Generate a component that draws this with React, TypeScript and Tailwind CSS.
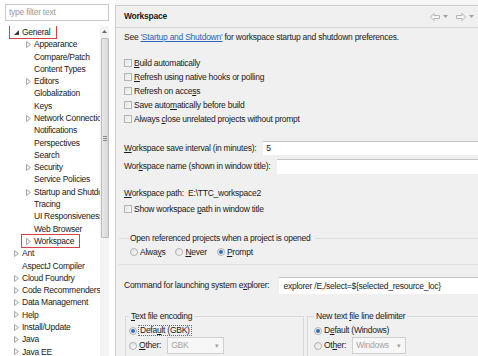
import React from 'react';

type TreeItem = { label: string; level: 0 | 1; arrow: 'open' | 'closed' | 'none'; marked?: boolean };

const TREE: TreeItem[] = [
  { label: 'General', level: 0, arrow: 'open', marked: true },
  { label: 'Appearance', level: 1, arrow: 'closed' },
  { label: 'Compare/Patch', level: 1, arrow: 'none' },
  { label: 'Content Types', level: 1, arrow: 'none' },
  { label: 'Editors', level: 1, arrow: 'closed' },
  { label: 'Globalization', level: 1, arrow: 'none' },
  { label: 'Keys', level: 1, arrow: 'none' },
  { label: 'Network Connections', level: 1, arrow: 'closed' },
  { label: 'Notifications', level: 1, arrow: 'none' },
  { label: 'Perspectives', level: 1, arrow: 'none' },
  { label: 'Search', level: 1, arrow: 'none' },
  { label: 'Security', level: 1, arrow: 'closed' },
  { label: 'Service Policies', level: 1, arrow: 'none' },
  { label: 'Startup and Shutdown', level: 1, arrow: 'closed' },
  { label: 'Tracing', level: 1, arrow: 'none' },
  { label: 'UI Responsiveness Monitoring', level: 1, arrow: 'none' },
  { label: 'Web Browser', level: 1, arrow: 'none' },
  { label: 'Workspace', level: 1, arrow: 'closed', marked: true },
  { label: 'Ant', level: 0, arrow: 'closed' },
  { label: 'AspectJ Compiler', level: 0, arrow: 'none' },
  { label: 'Cloud Foundry', level: 0, arrow: 'closed' },
  { label: 'Code Recommenders', level: 0, arrow: 'closed' },
  { label: 'Data Management', level: 0, arrow: 'closed' },
  { label: 'Help', level: 0, arrow: 'closed' },
  { label: 'Install/Update', level: 0, arrow: 'closed' },
  { label: 'Java', level: 0, arrow: 'closed' },
  { label: 'Java EE', level: 0, arrow: 'closed' },
];

const Arrow = ({ kind }: { kind: TreeItem['arrow'] }) => (
  <span className="w-[9px] h-[9px] shrink-0 flex items-center justify-center">
    {kind === 'closed' && (
      <svg width="5" height="7" viewBox="0 0 5 7">
        <path d="M0.5 0.5 L4.5 3.5 L0.5 6.5 Z" fill="#f4f4f4" stroke="#a8a8a8" strokeWidth="1" />
      </svg>
    )}
    {kind === 'open' && (
      <svg width="5" height="5" viewBox="0 0 5 5">
        <path d="M5 0 L5 5 L0 5 Z" fill="#3c3c3c" />
      </svg>
    )}
  </span>
);

const Check = () => (
  <span className="w-[8px] h-[8px] shrink-0 border border-[#b4b4b4] bg-linear-to-br from-[#e4e4e4] to-[#fafafa]" />
);

const Radio = ({ on }: { on?: boolean }) => (
  <span className="w-[8px] h-[8px] shrink-0 rounded-full border border-[#b2b2b2] bg-linear-to-br from-[#e2e2e2] to-[#fafafa] flex items-center justify-center">
    {on && <span className="w-[4px] h-[4px] rounded-full bg-[#2f6fbf]" />}
  </span>
);

const CheckRow = ({ children }: { children: React.ReactNode }) => (
  <div className="h-[14px] flex items-center gap-[2px]">
    <Check />
    <span>{children}</span>
  </div>
);

const Combo = ({ value, width }: { value: string; width: string }) => (
  <div className={`${width} h-[17px] ml-[4px] border border-[#cfcfcf] bg-[#f7f7f7] flex items-center justify-between pl-[3px] pr-[4px] text-[#a3a3a3]`}>
    <span>{value}</span>
    <span className="text-[7px]">▾</span>
  </div>
);

const Sidebar = () => (
  <div className="w-[115px] shrink-0 bg-white flex flex-col pt-[4px]">
    <div className="ml-[5px] w-[104px] h-[17px] border border-[#c9c9c9] flex items-center pl-[3px] text-[#9c9c9c]">
      type filter text
    </div>
    <div className="flex mt-[5px] flex-1 min-h-0">
      <div className="w-[100px] overflow-hidden whitespace-nowrap">
        {TREE.map((item) => (
          <div
            key={item.label}
            className={`h-[12.3px] flex items-center ${item.level === 0 ? 'pl-[9px]' : 'pl-[21px]'}`}
          >
            <span
              className={`h-[14px] flex items-center pl-[2px] border ${
                item.marked ? 'border-[#d8414a] pr-[5px]' : 'border-transparent'
              }`}
            >
              <Arrow kind={item.arrow} />
              <span className="ml-[1px]">{item.label}</span>
            </span>
          </div>
        ))}
      </div>
      <div className="w-[9px] bg-[#f3f3f3] flex flex-col items-center">
        <div className="h-[10px] flex items-center justify-center">
          <svg width="5" height="3" viewBox="0 0 5 3">
            <path d="M0 3 L2.5 0 L5 3 Z" fill="#6a6a6a" />
          </svg>
        </div>
        <div className="mt-[2px] w-[8px] h-[200px] rounded-[1px] border border-[#bcbcbc] bg-linear-to-r from-[#e9e9e9] to-[#d6d6d6] flex flex-col items-center justify-center gap-[1px]">
          <span className="w-[4px] h-px bg-[#8a8a8a]" />
          <span className="w-[4px] h-px bg-[#8a8a8a]" />
          <span className="w-[4px] h-px bg-[#8a8a8a]" />
        </div>
      </div>
    </div>
  </div>
);

const NavArrows = () => (
  <div className="flex items-center gap-[3px]">
    <svg width="10" height="8" viewBox="0 0 10 8">
      <path d="M0.5 4 L4 0.5 L4 2.5 L9.5 2.5 L9.5 5.5 L4 5.5 L4 7.5 Z" fill="#f6f6f6" stroke="#b5b5b5" strokeWidth="1" />
    </svg>
    <svg width="5" height="3" viewBox="0 0 5 3">
      <path d="M0 0 L5 0 L2.5 3 Z" fill="#a0a0a0" />
    </svg>
    <svg width="10" height="8" viewBox="0 0 10 8" className="ml-[5px]">
      <path d="M9.5 4 L6 0.5 L6 2.5 L0.5 2.5 L0.5 5.5 L6 5.5 L6 7.5 Z" fill="#f6f6f6" stroke="#b5b5b5" strokeWidth="1" />
    </svg>
    <svg width="5" height="3" viewBox="0 0 5 3">
      <path d="M0 0 L5 0 L2.5 3 Z" fill="#a0a0a0" />
    </svg>
  </div>
);

const Main = () => (
  <div className="flex-1 min-w-0 flex flex-col pt-[5px] bg-[#f7f7f7]">
    <div className="flex-1 flex flex-col border-t border-l border-[#cdcdcd] bg-[#f0f0f0]">
      <div className="h-[22px] shrink-0 border-b border-[#d6d6d6] flex items-center justify-between pl-[8px] pr-[4px]">
        <span className="font-bold text-[#1a1a1a]">Workspace</span>
        <NavArrows />
      </div>

      <div className="flex flex-col pl-[8px]">
        <div className="mt-[2px] h-[14px] flex items-center whitespace-nowrap">
          See&nbsp;<span className="text-[#2a66b8] underline">'Startup and Shutdown'</span>&nbsp;for workspace startup and shutdown preferences.
        </div>

        <div className="mt-[12px]">
          <CheckRow><u>B</u>uild automatically</CheckRow>
          <CheckRow><u>R</u>efresh using native hooks or polling</CheckRow>
          <CheckRow>Refresh on acce<u>s</u>s</CheckRow>
          <CheckRow>Save auto<u>m</u>atically before build</CheckRow>
          <CheckRow>Always <u>c</u>lose unrelated projects without prompt</CheckRow>
        </div>

        <div className="mt-[14px] h-[16px] flex items-center whitespace-nowrap">
          <span><u>W</u>orkspace save interval (in minutes):</span>
          <div className="ml-[7px] flex-1 h-[14px] bg-white border-t border-[#c4c4c4] flex items-center pl-[3px]">5</div>
        </div>
        <div className="mt-[2px] h-[16px] flex items-center whitespace-nowrap">
          <span>Wor<u>k</u>space name (shown in window title):</span>
          <div className="ml-[7px] flex-1 h-[15px] bg-white border-t border-[#c4c4c4]" />
        </div>

        <div className="mt-[12px] h-[14px] flex items-center whitespace-nowrap">
          <span><u>W</u>orkspace path:&nbsp;&nbsp;E:\TTC_workspace2</span>
        </div>
        <div className="mt-[2px]">
          <CheckRow>Show workspace <u>p</u>ath in window title</CheckRow>
        </div>

        <fieldset className="mt-[15px] -ml-[5px] border-t border-b border-[#dedede] pl-[11px] pb-[5px]">
          <legend className="h-[14px] flex items-center pr-[4px]">
            <span>Open referenced projects when a project is opened</span>
          </legend>
          <div className="h-[14px] flex items-center gap-[2px]">
            <Radio />
            <span className="mr-[8px]">Alwa<u>y</u>s</span>
            <Radio />
            <span className="mr-[8px]"><u>N</u>ever</span>
            <Radio on />
            <span><u>P</u>rompt</span>
          </div>
        </fieldset>

        <div className="mt-[12px] h-[17px] flex items-center whitespace-nowrap">
          <span>Command for launching system e<u>x</u>plorer:</span>
          <div className="ml-[10px] flex-1 h-[17px] bg-white border-t border-[#c4c4c4] flex items-center pl-[4px]">
            explorer /E,/select=${'{'}selected_resource_loc{'}'}
          </div>
        </div>

        <div className="mt-[15px] flex gap-[3px] whitespace-nowrap">
          <fieldset className="ml-[1px] w-[179px] shrink-0 border border-[#d9d9d9] pl-[3px] h-[60px]">
            <legend className="h-[14px] flex items-center px-[2px]">
              <span><u>T</u>ext file encoding</span>
            </legend>
            <div className="h-[15px] flex items-center gap-[2px]">
              <Radio on />
              <span className="outline outline-1 outline-dotted outline-[#6a6a6a] px-[1px]">Defa<u>u</u>lt (GBK)</span>
            </div>
            <div className="h-[15px] flex items-center gap-[2px]">
              <Radio />
              <span><u>O</u>ther:</span>
              <Combo value="GBK" width="w-[57px]" />
            </div>
          </fieldset>
          <fieldset className="flex-1 border border-r-0 border-[#d9d9d9] pl-[6px] h-[60px]">
            <legend className="h-[14px] flex items-center px-[2px]">
              <span>New text <u>f</u>ile line delimiter</span>
            </legend>
            <div className="h-[15px] flex items-center gap-[2px]">
              <Radio on />
              <span>D<u>e</u>fault (Windows)</span>
            </div>
            <div className="h-[15px] flex items-center gap-[2px]">
              <Radio />
              <span>Ot<u>h</u>er:</span>
              <Combo value="Windows" width="w-[54px]" />
            </div>
          </fieldset>
        </div>
      </div>
    </div>
  </div>
);

export default function App() {
  return (
    <div className="w-[478px] h-[356px] overflow-hidden flex bg-[#f0f0f0] text-[#1a1a1a] font-['Liberation_Sans',Arial,sans-serif] text-[8.5px] leading-none tracking-[-0.25px]">
      <Sidebar />
      <Main />
    </div>
  );
}
